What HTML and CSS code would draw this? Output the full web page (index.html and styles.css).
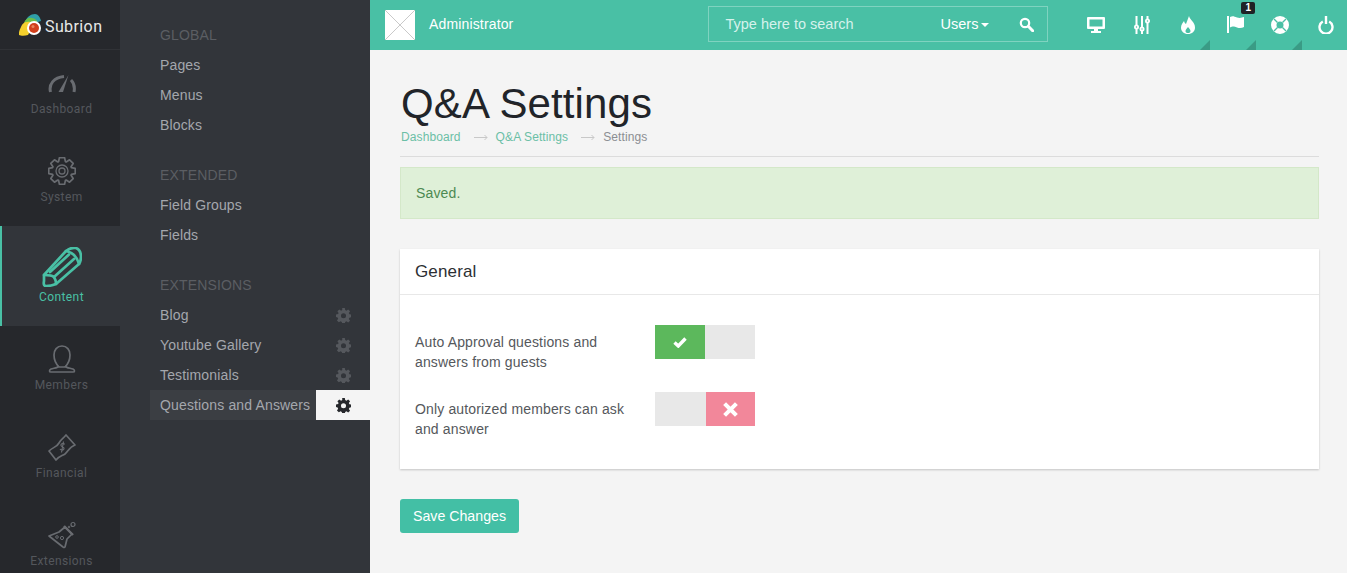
FILE: index.html
```html
<!DOCTYPE html>
<html lang="en">
<head>
<meta charset="utf-8">
<title>Q&amp;A Settings</title>
<link rel="stylesheet" href="styles.css">
</head>
<body>
<div class="app">
  <nav class="rail">
    <div class="brand">
      <svg class="brand-mark" width="23" height="22" viewBox="0 0 23 22">
        <path d="M6 9C7 3 12 0 16 0c3 0 5 3 6 7l-6 2z" fill="#2f9fa8"/>
        <path d="M5 9c1-4 5-6 8-5 3 .5 5 2 5 4l-7 4z" fill="#6cc04a"/>
        <path d="M0 21c-.5-3 1-6 2-8 1-3 3-5 6-5 3-.5 5 0 7 2L9 21c-3 1-7 1-9 0z" fill="#f4d02c"/>
        <circle cx="15" cy="14" r="7" fill="#fff"/>
        <circle cx="15" cy="14" r="5" fill="#d2401c"/>
        <circle cx="14" cy="12.500" r="1.500" fill="#e8845a"/>
      </svg>
      <span class="brand-name">Subrion</span>
    </div>
    <a class="rail-item">
      <svg class="rail-icon rail-icon-gauge" width="28" height="19" viewBox="0 0 28 19" fill="none" stroke="currentColor" stroke-width="3">
        <path d="M2.500 18C.5 10 6 3.500 16 2.500"/>
        <path d="M23 6c3 3 4 7 3 12"/>
        <path d="M20.500 1L15 18h-4.500z" fill="currentColor" stroke="none"/>
      </svg>
      <span>Dashboard</span>
    </a>
    <a class="rail-item">
      <svg class="rail-icon" width="28" height="28" viewBox="-14 -14 28 28" fill="none" stroke="currentColor" stroke-width="1.700" stroke-linejoin="round">
        <path d="M9.400-3.400L13.250-2.600V2.600L9.400 3.400 9.050 4.240 11.200 7.530 7.530 11.200 4.240 9.050 3.400 9.400 2.600 13.250H-2.600L-3.400 9.400-4.240 9.050-7.530 11.200-11.200 7.530-9.050 4.240-9.400 3.400-13.250 2.600V-2.600L-9.400-3.400-9.050-4.240-11.200-7.530-7.530-11.200-4.240-9.050-3.400-9.400-2.600-13.250H2.600L3.400-9.400 4.240-9.050 7.530-11.200 11.200-7.530 9.050-4.240z"/>
        <circle r="6" stroke-width="1.300"/><circle r="3" stroke-width="1.300"/>
      </svg>
      <span>System</span>
    </a>
    <a class="rail-item rail-item-active">
      <svg class="rail-icon" width="40" height="40" viewBox="0 0 40 40" fill="none" stroke="currentColor" stroke-width="2.700" stroke-linejoin="round" stroke-linecap="round">
        <path d="M2 28L24 4Q29 0 34 1Q39 3 39 10Q39 14 37 17L14 37Q9 39 4 39Q1 39 2 34z"/>
        <path d="M2 28Q10 28 12 30Q14 33 14 37"/>
        <path d="M24 4Q34 6 37 17"/>
        <path d="M8 25L27 7.500M12 30L32 12"/>
      </svg>
      <span>Content</span>
    </a>
    <a class="rail-item">
      <svg class="rail-icon" width="28" height="28" viewBox="0 0 28 28" fill="none" stroke="currentColor" stroke-width="1.700">
        <path d="M14 1c-5 0-8 4-8 9 0 5 2 9 5 12h6c3-3 5-7 5-12 0-5-3-9-8-9z"/>
        <path d="M11 21c-1 2-5 2-8 3-2 1-2 3 0 3h22c2 0 2-2 0-3-3-1-7-1-8-3"/>
      </svg>
      <span>Members</span>
    </a>
    <a class="rail-item">
      <svg class="rail-icon" width="28" height="28" viewBox="0 0 28 28" fill="none" stroke="currentColor" stroke-width="1.700" stroke-linejoin="round">
        <path d="M18 2L27 12C21 14 20 19 17 21C14 23 11 23 8 27L1 18C5 14 9 14 11 10C13 6 15 6 18 2z"/>
        <path d="M16.500 11.500c-1-2-4-1-3.500 1 .5 1.500 3 1 3 3 0 2-3 2-4 .5M15.500 8.500l-2 11" stroke-width="1.200"/>
      </svg>
      <span>Financial</span>
    </a>
    <a class="rail-item">
      <svg class="rail-icon" width="28" height="28" viewBox="0 0 28 28" fill="none" stroke="currentColor" stroke-width="1.700" stroke-linejoin="round">
        <path d="M1 15L11 11L17 6L24 13L19 18L17 26Q16 27 15 26z"/>
        <path d="M16 5L25 14" stroke-width="2.400"/>
        <circle cx="25" cy="3.500" r="2" stroke-width="1.200"/><circle cx="21" cy="6" r=".8" stroke-width="1"/>
        <circle cx="9" cy="16" r="1.300" stroke-width="1"/><circle cx="14" cy="17" r="1.600" stroke-width="1"/>
      </svg>
      <span>Extensions</span>
    </a>
  </nav>
  <aside class="panel">
    <h4 class="panel-title panel-title-first">GLOBAL</h4>
    <a class="panel-link">Pages</a>
    <a class="panel-link">Menus</a>
    <a class="panel-link">Blocks</a>
    <h4 class="panel-title">EXTENDED</h4>
    <a class="panel-link">Field Groups</a>
    <a class="panel-link">Fields</a>
    <h4 class="panel-title">EXTENSIONS</h4>
    <a class="panel-link">Blog<svg class="cog" viewBox="0 0 16 16"><use href="#cog"/></svg></a>
    <a class="panel-link">Youtube Gallery<svg class="cog" viewBox="0 0 16 16"><use href="#cog"/></svg></a>
    <a class="panel-link">Testimonials<svg class="cog" viewBox="0 0 16 16"><use href="#cog"/></svg></a>
    <a class="panel-link panel-link-active">Questions and Answers<span class="cog-box"><svg class="cog" viewBox="0 0 16 16"><use href="#cog"/></svg></span></a>
  </aside>
  <div class="main">
    <header class="topbar">
      <div class="avatar">
        <svg width="30" height="30" viewBox="0 0 30 30"><path d="M0 0l30 30M30 0L0 30" stroke="#c9c9c9" stroke-width="1"/></svg>
      </div>
      <span class="username">Administrator</span>
      <form class="search">
        <span class="search-text">Type here to search</span>
        <span class="search-scope">Users<i class="caret"></i></span>
        <svg class="search-icon" width="15" height="15" viewBox="0 0 15 15" fill="none" stroke="#fff"><circle cx="6" cy="6" r="4.200" stroke-width="2.200"/><path d="M9.500 9.500l4.200 4.200" stroke-width="3" stroke-linecap="round"/></svg>
      </form>
      <div class="tools">
        <a class="tool">
          <svg width="18" height="16" viewBox="0 0 18 16" fill="#fff"><path fill-rule="evenodd" d="M1 0h16a1 1 0 0 1 1 1v10a1 1 0 0 1-1 1H1a1 1 0 0 1-1-1V1a1 1 0 0 1 1-1zm1.500 2.500v7h13v-7z"/><path d="M7 12h4v2h3v2H4v-2h3z"/></svg>
        </a>
        <a class="tool">
          <svg width="16" height="18" viewBox="0 0 16 18" fill="none" stroke="#fff"><path d="M2.500 0v18M8 0v18M13.500 0v18" stroke-width="2"/><circle cx="2.500" cy="11" r="1.600" fill="#49c0a5" stroke-width="1.800"/><circle cx="8" cy="13" r="1.600" fill="#49c0a5" stroke-width="1.800"/><circle cx="13.500" cy="5" r="1.600" fill="#49c0a5" stroke-width="1.800"/></svg>
        </a>
        <a class="tool tool-menu">
          <svg width="16" height="18" viewBox="0 0 16 18" fill="#fff"><path fill-rule="evenodd" d="M9 0c1 4 6 6 6 11.500C15 15.500 12 18 8 18s-7-2.500-7-6.500c0-3 2-5 3-6.500.5 1.500 1 2.500 2 3C7 5 8 3 9 0zM8 11c-1 1.500-2.500 2.500-2.500 4S6.500 17 8 17s2.500-.5 2.500-2S9 12.500 8 11z"/></svg>
        </a>
        <a class="tool tool-menu tool-flag">
          <svg width="18" height="17" viewBox="0 0 18 17" fill="#fff"><path d="M0 0h2v17H0z"/><path d="M3 1c3-1.500 4-.5 7 .5 3 1 5 0 7-.5v10c-2 1-4 1.500-7 .5s-4-1.500-7 0z"/></svg>
          <b class="badge">1</b>
        </a>
        <a class="tool tool-menu">
          <svg width="18" height="18" viewBox="0 0 18 18" fill="none"><circle cx="9" cy="9" r="6.250" stroke="#fff" stroke-width="5.500"/><path d="M3 3l3.500 3.500M15 3l-3.500 3.500M3 15l3.500-3.500M15 15l-3.500-3.500" stroke="#49c0a5" stroke-width="1.400"/></svg>
        </a>
        <a class="tool">
          <svg width="16" height="18" viewBox="0 0 16 18" fill="none" stroke="#fff" stroke-width="2.400"><path d="M4.800 5.500a6.500 6.500 0 1 0 6.400 0"/><path d="M8 0v8"/></svg>
        </a>
      </div>
    </header>
    <main class="content">
      <h1 class="page-title">Q&amp;A Settings</h1>
      <ol class="crumbs">
        <li><a>Dashboard</a></li>
        <li class="arrow"><svg width="14" height="7" viewBox="0 0 14 7" fill="none" stroke="#c8c8c8"><path d="M0 3.500h13M10.500 1l2.500 2.500-2.500 2.500"/></svg></li>
        <li><a>Q&amp;A Settings</a></li>
        <li class="arrow"><svg width="14" height="7" viewBox="0 0 14 7" fill="none" stroke="#c8c8c8"><path d="M0 3.500h13M10.500 1l2.500 2.500-2.500 2.500"/></svg></li>
        <li>Settings</li>
      </ol>
      <div class="alert">Saved.</div>
      <section class="card">
        <h3 class="card-title">General</h3>
        <div class="card-body">
          <div class="row">
            <label class="row-label">Auto Approval questions and answers from guests</label>
            <div class="switch">
              <span class="switch-on"><svg width="14" height="11" viewBox="0 0 14 11" fill="none" stroke="#fff" stroke-width="3.400"><path d="M1.500 5.500l3.800 3.500 7.200-7.500"/></svg></span>
              <span class="switch-blank"></span>
            </div>
          </div>
          <div class="row">
            <label class="row-label">Only autorized members can ask and answer</label>
            <div class="switch">
              <span class="switch-blank switch-blank-off"></span>
              <span class="switch-off"><svg width="15" height="15" viewBox="0 0 14 14" fill="none" stroke="#fff" stroke-width="3.800"><path d="M1.500 1.500l11 11M12.500 1.500l-11 11"/></svg></span>
            </div>
          </div>
        </div>
      </section>
      <button class="save" type="button">Save Changes</button>
    </main>
  </div>
</div>
<svg class="defs" width="0" height="0">
  <symbol id="cog" viewBox="0 0 16 16">
    <path fill="currentColor" fill-rule="evenodd" d="M6.600 0h2.800l.4 2.200 1.300.6 1.900-1.300 2 2-1.300 1.900.6 1.300 2.200.4v2.800l-2.200.4-.6 1.300 1.300 1.900-2 2-1.900-1.300-1.300.6-.4 2.200H6.600l-.4-2.200-1.300-.6L3 15.300l-2-2 1.300-1.900-.6-1.300L0 9.700V6.900l2.200-.4.6-1.300L1.500 3.500l2-2 1.900 1.300 1.300-.6zM8 5.500a2.700 2.700 0 1 0 0 5.400 2.700 2.700 0 0 0 0-5.400z"/>
  </symbol>
</svg>
</body>
</html>
```
FILE: styles.css
```css
* { box-sizing: border-box; }
html, body { margin: 0; height: 100%; overflow: hidden; }
body { font-family: "Liberation Sans", Arial, sans-serif; font-size: 14px; color: #4a4d52; background: #f4f4f4; letter-spacing: .15px; }
.defs { position: absolute; }
.app { display: flex; height: 573px; overflow: hidden; }

.rail { width: 120px; flex: none; background: #26282c; height: 573px; overflow: hidden; }
.brand { height: 50px; display: flex; align-items: center; padding: 0 0 0 19px; border-bottom: 1px solid #303236; }
.brand-name { font-family: Roboto, sans-serif; font-size: 16px; color: #e8e8e8; letter-spacing: .4px; margin: 3px 0 0 3px; }
.rail-item { display: flex; flex-direction: column; align-items: center; justify-content: flex-end; height: 88px; padding: 0 0 22px 3px; font-family: Roboto, sans-serif; font-size: 12px; letter-spacing: .4px; color: #54575c; }
.rail-icon { color: #696c71; margin-bottom: 5px; }
.rail-icon-gauge { margin-bottom: 9px; }
.rail-item-active { height: 100px; background: #32353a; color: #49c0a5; border-left: 2px solid #49c0a5; padding-left: 1px; }
.rail-item-active .rail-icon { color: #49c0a5; margin-bottom: 3px; }

.panel { width: 250px; flex: none; background: #32353a; padding: 20px 0 0 30px; }
.panel-title { margin: 20px 0 0; height: 30px; font-weight: 400; font-size: 14px; line-height: 30px; color: #5b5e63; padding-left: 10px; }
.panel-title-first { margin-top: 0; }
.panel-link { position: relative; display: flex; justify-content: space-between; align-items: center; height: 30px; line-height: 30px; padding: 0 19px 0 10px; color: #a4a7ad; font-size: 14px; }
.cog { width: 15px; height: 15px; color: #55585d; }
.panel-link-active { background: #3b3e43; }
.cog-box { position: absolute; right: 0; top: 0; width: 54px; height: 30px; background: #f4f4f4; display: flex; align-items: center; justify-content: center; }
.cog-box .cog { color: #26282c; }

.main { flex: 1; min-width: 0; display: flex; flex-direction: column; }
.topbar { height: 50px; flex: none; background: #49c0a5; display: flex; align-items: center; padding-left: 15px; color: #fff; overflow: hidden; }
.avatar { width: 30px; height: 30px; flex: none; background: #fff; display: flex; }
.username { margin: 0 0 2px 14px; font-size: 14px; flex: none; }
.search { margin: 0 0 2px 195px; width: 340px; height: 36px; flex: none; border: 1px solid #7fd3c0; display: flex; align-items: center; padding: 0 13px 0 16px; }
.search-text { font-size: 14.500px; letter-spacing: 0; color: #d6f2ec; flex: 1; }
.search-scope { font-size: 14.500px; letter-spacing: 0; color: #fff; display: flex; align-items: center; gap: 3px; margin-right: 30px; }
.caret { border: 4px solid transparent; border-top-color: #fff; border-bottom: 0; margin-top: 1px; }
.search-icon { flex: none; }
.tools { display: flex; flex: none; margin-left: 24px; }
.tool { position: relative; width: 46px; height: 50px; padding: 0 0 1px 2px; display: flex; align-items: center; justify-content: center; }
.tool-flag { padding-left: 5px; }
.tool-menu::after { content: ""; position: absolute; right: 0; bottom: 0; border: 5px solid transparent; border-right-color: #3a9b85; border-bottom-color: #3a9b85; }
.badge { position: absolute; left: 31px; top: 2px; width: 14px; height: 12px; line-height: 12px; border-radius: 2px; background: #1f2226; color: #fff; font-size: 10px; text-align: center; }

.content { flex: 1; padding: 27px 28px 0 30px; }
.page-title { margin: 0; padding-left: 1px; font-weight: 400; font-size: 42px; line-height: 53px; letter-spacing: .1px; color: #212429; }
.crumbs { list-style: none; margin: 0; padding: 0 0 12px 1px; display: flex; font-size: 12px; line-height: 15px; letter-spacing: .1px; color: #8b8e92; border-bottom: 1px solid #dcdcdc; height: 27px; }
.crumbs a { color: #6bbfa6; }
.arrow { margin: 0 8px 0 13px; display: flex; align-items: center; }
.alert { margin-top: 10px; height: 52px; line-height: 50px; padding-left: 15px; background: #dff0d8; border: 1px solid #d4e8c9; color: #4d8a52; font-size: 14px; }
.card { margin-top: 30px; background: #fff; height: 220px; box-shadow: 0 1px 2px rgba(0,0,0,.2); }
.card-title { margin: 0; height: 46px; line-height: 45px; padding-left: 15px; font-size: 17px; font-weight: 400; color: #2c2f33; border-bottom: 1px solid #e8e8e8; }
.card-body { padding: 30px 15px 0; }
.row { display: flex; height: 67px; gap: 30px; }
.row-label { width: 210px; line-height: 20px; font-size: 14px; color: #55585c; padding-top: 7px; }
.switch { width: 100px; height: 34px; display: flex; background: #e8e8e8; }
.switch-on { width: 50px; background: #5cb85c; display: flex; align-items: center; justify-content: center; }
.switch-blank { width: 50px; }
.switch-blank-off { width: 51px; }
.switch-off { width: 49px; background: #f2879a; display: flex; align-items: center; justify-content: center; }
.save { display: block; margin-top: 30px; width: 119px; height: 34px; padding: 0; border: 0; border-radius: 3px; background: #43bfa5; color: #fff; font: 14.200px "Liberation Sans", Arial, sans-serif; }
```
